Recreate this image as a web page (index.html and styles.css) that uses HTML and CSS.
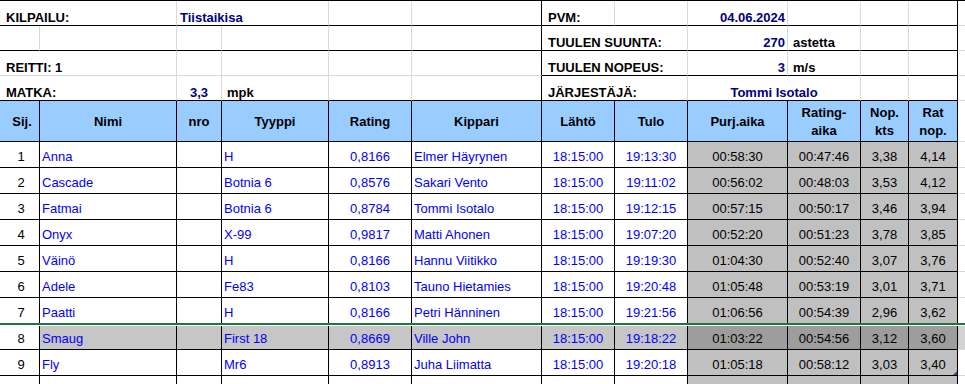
FILE: index.html
```html
<!DOCTYPE html>
<html lang="fi">
<head>
<meta charset="utf-8">
<title>Kilpailu</title>
<link rel="stylesheet" href="styles.css">
</head>
<body>
<div class="sheet">
  <!-- row 1 -->
  <div class="c s2 bb b lab">KILPAILU:</div>
  <div class="c s2 bb b nv pl3">Tiistaikisa</div>
  <div class="c bb"></div>
  <div class="c bb br"></div>
  <div class="c bb b lab">PVM:</div>
  <div class="c bb"></div>
  <div class="c bb b nv rt">04.06.2024</div>
  <div class="c bb"></div>
  <div class="c bb"></div>
  <div class="c bb br"></div>
  <div class="c nr"></div>
  <!-- row 2 -->
  <div class="c bb"></div>
  <div class="c bb"></div>
  <div class="c bb"></div>
  <div class="c bb"></div>
  <div class="c bb"></div>
  <div class="c bb br"></div>
  <div class="c s2 bb b lab">TUULEN SUUNTA:</div>
  <div class="c bb b nv rt">270</div>
  <div class="c bb b unit">astetta</div>
  <div class="c bb"></div>
  <div class="c bb br"></div>
  <div class="c nr"></div>
  <!-- row 3 -->
  <div class="c s2 b lab">REITTI: 1</div>
  <div class="c"></div>
  <div class="c"></div>
  <div class="c"></div>
  <div class="c br"></div>
  <div class="c s2 bb b lab">TUULEN NOPEUS:</div>
  <div class="c bb b nv rt">3</div>
  <div class="c bb b unit">m/s</div>
  <div class="c bb"></div>
  <div class="c bb br"></div>
  <div class="c nr"></div>
  <!-- row 4 -->
  <div class="c s2 bb b lab">MATKA:</div>
  <div class="c bb b nv ctr">3,3</div>
  <div class="c bb b unit">mpk</div>
  <div class="c bb"></div>
  <div class="c bb br"></div>
  <div class="c s2 bb b lab">JÄRJESTÄJÄ:</div>
  <div class="c s2 bb b nv ctr">Tommi Isotalo</div>
  <div class="c bb"></div>
  <div class="c bb br"></div>
  <div class="c nr"></div>
  <!-- header -->
  <div class="h sij">Sij.</div>
  <div class="h">Nimi</div>
  <div class="h">nro</div>
  <div class="h">Tyyppi</div>
  <div class="h">Rating</div>
  <div class="h">Kippari</div>
  <div class="h">Lähtö</div>
  <div class="h">Tulo</div>
  <div class="h">Purj.aika</div>
  <div class="h">Rating-<br>aika</div>
  <div class="h">Nop.<br>kts</div>
  <div class="h">Rat<br>nop.</div>
  <div class="c nr"></div>
  <!-- data rows -->
  <div class="d sij">1</div><div class="d bl">Anna</div><div class="d"></div><div class="d bl">H</div><div class="d bl ctr">0,8166</div><div class="d bl">Elmer Häyrynen</div><div class="d bl ctr">18:15:00</div><div class="d bl ctr">19:13:30</div><div class="d g ctr">00:58:30</div><div class="d g ctr">00:47:46</div><div class="d g ctr">3,38</div><div class="d g ctr">4,14</div><div class="c nr"></div>
  <div class="d sij">2</div><div class="d bl">Cascade</div><div class="d"></div><div class="d bl">Botnia 6</div><div class="d bl ctr">0,8576</div><div class="d bl">Sakari Vento</div><div class="d bl ctr">18:15:00</div><div class="d bl ctr">19:11:02</div><div class="d g ctr">00:56:02</div><div class="d g ctr">00:48:03</div><div class="d g ctr">3,53</div><div class="d g ctr">4,12</div><div class="c nr"></div>
  <div class="d sij">3</div><div class="d bl">Fatmai</div><div class="d"></div><div class="d bl">Botnia 6</div><div class="d bl ctr">0,8784</div><div class="d bl">Tommi Isotalo</div><div class="d bl ctr">18:15:00</div><div class="d bl ctr">19:12:15</div><div class="d g ctr">00:57:15</div><div class="d g ctr">00:50:17</div><div class="d g ctr">3,46</div><div class="d g ctr">3,94</div><div class="c nr"></div>
  <div class="d sij">4</div><div class="d bl">Onyx</div><div class="d"></div><div class="d bl">X-99</div><div class="d bl ctr">0,9817</div><div class="d bl">Matti Ahonen</div><div class="d bl ctr">18:15:00</div><div class="d bl ctr">19:07:20</div><div class="d g ctr">00:52:20</div><div class="d g ctr">00:51:23</div><div class="d g ctr">3,78</div><div class="d g ctr">3,85</div><div class="c nr"></div>
  <div class="d sij">5</div><div class="d bl">Väinö</div><div class="d"></div><div class="d bl">H</div><div class="d bl ctr">0,8166</div><div class="d bl">Hannu Viitikko</div><div class="d bl ctr">18:15:00</div><div class="d bl ctr">19:19:30</div><div class="d g ctr">01:04:30</div><div class="d g ctr">00:52:40</div><div class="d g ctr">3,07</div><div class="d g ctr">3,76</div><div class="c nr"></div>
  <div class="d sij">6</div><div class="d bl">Adele</div><div class="d"></div><div class="d bl">Fe83</div><div class="d bl ctr">0,8103</div><div class="d bl">Tauno Hietamies</div><div class="d bl ctr">18:15:00</div><div class="d bl ctr">19:20:48</div><div class="d g ctr">01:05:48</div><div class="d g ctr">00:53:19</div><div class="d g ctr">3,01</div><div class="d g ctr">3,71</div><div class="c nr"></div>
  <div class="d sij">7</div><div class="d bl">Paatti</div><div class="d"></div><div class="d bl">H</div><div class="d bl ctr">0,8166</div><div class="d bl">Petri Hänninen</div><div class="d bl ctr">18:15:00</div><div class="d bl ctr">19:21:56</div><div class="d g ctr">01:06:56</div><div class="d g ctr">00:54:39</div><div class="d g ctr">2,96</div><div class="d g ctr">3,62</div><div class="c nr"></div>
  <div class="d sij">8</div><div class="d bl sw">Smaug</div><div class="d sw"></div><div class="d bl sw">First 18</div><div class="d bl sw ctr">0,8669</div><div class="d bl sw">Ville John</div><div class="d bl sw ctr">18:15:00</div><div class="d bl sw ctr">19:18:22</div><div class="d sg ctr">01:03:22</div><div class="d sg ctr">00:54:56</div><div class="d sg ctr">3,12</div><div class="d sg ctr">3,60</div><div class="c nr sx"></div>
  <div class="d sij">9</div><div class="d bl">Fly</div><div class="d"></div><div class="d bl">Mr6</div><div class="d bl ctr">0,8913</div><div class="d bl">Juha Liimatta</div><div class="d bl ctr">18:15:00</div><div class="d bl ctr">19:20:18</div><div class="d g ctr">01:05:18</div><div class="d g ctr">00:58:12</div><div class="d g ctr">3,03</div><div class="d g ctr tri">3,40</div><div class="c nr"></div>
  <div class="d"></div><div class="d"></div><div class="d"></div><div class="d"></div><div class="d"></div><div class="d"></div><div class="d"></div><div class="d"></div><div class="d g"></div><div class="d g"></div><div class="d g"></div><div class="d g"></div><div class="c nr"></div>
  <div class="sel"></div>
</div>
</body>
</html>
```

FILE: styles.css
```css
html, body {
  margin: 0;
  padding: 0;
  overflow: hidden;
  background: #ffffff;
}

.sheet {
  position: relative;
  display: grid;
  grid-template-columns: 40px 137px 45px 107px 83px 130px 73px 73px 100px 73px 48px 49px 1fr;
  grid-template-rows: 25px 25px 25px 25px 41px repeat(10, 26px);
  width: 965px;
  border-top: 1px solid #000;
  font-family: "Liberation Sans", Arial, sans-serif;
  font-size: 13px;
  line-height: 15px;
  color: #000;
}

.c {
  display: flex;
  align-items: flex-end;
  white-space: nowrap;
  border-right: 1px solid #d9d9d9;
  border-bottom: 1px solid #d9d9d9;
  padding: 0 2px;
  min-width: 0;
}

.s2 { grid-column: span 2; }
.bb { border-bottom-color: #000; }
.br { border-right-color: #000; }
.nr { border-right: none; }
.b { font-weight: bold; }
.nv { color: #000080; }
.lab { padding-left: 6px; }
.unit { padding-left: 5px; }
.pl3 { padding-left: 3px; }
.rt { justify-content: flex-end; }
.ctr { justify-content: center; }

.h {
  display: flex;
  align-items: center;
  justify-content: center;
  text-align: center;
  background: #99ccff;
  font-weight: bold;
  line-height: 18px;
  padding-top: 2px;
  border-right: 1px solid #000;
  border-bottom: 1px solid #000;
}

.d {
  display: flex;
  align-items: flex-end;
  white-space: nowrap;
  padding: 0 2px 3px;
  border-right: 1px solid #000;
  border-bottom: 1px solid #000;
  background: #fff;
  min-width: 0;
}

.sij { justify-content: center; padding-left: 5px; }
.bl { color: #0000ff; }
.g { background: #c0c0c0; }
.sw { background: #c6c6c6; }
.sg { background: #9d9d9d; }
.sx { background: #d2d2d2; }

.tri { position: relative; }
.tri::after {
  content: "";
  position: absolute;
  right: 0;
  bottom: 0;
  border-style: solid;
  border-width: 0 0 4px 4px;
  border-color: transparent transparent #3b4a8c transparent;
}

/* Excel selection outline drawn over row 8 */
.sel {
  position: absolute;
  grid-row: 13;
  grid-column: 1 / -1;
  top: -1px;
  bottom: -2px;
  left: 0;
  right: 0;
  border-top: 2px solid #217346;
  border-bottom: 2px solid #217346;
  box-shadow: inset 0 1px #fff, inset 0 -1px #fff;
  z-index: 1;
  pointer-events: none;
}

.sel::after {
  content: "";
  position: absolute;
  left: 0;
  bottom: -3px;
  width: 4px;
  height: 5px;
  background: #217346;
}
```
